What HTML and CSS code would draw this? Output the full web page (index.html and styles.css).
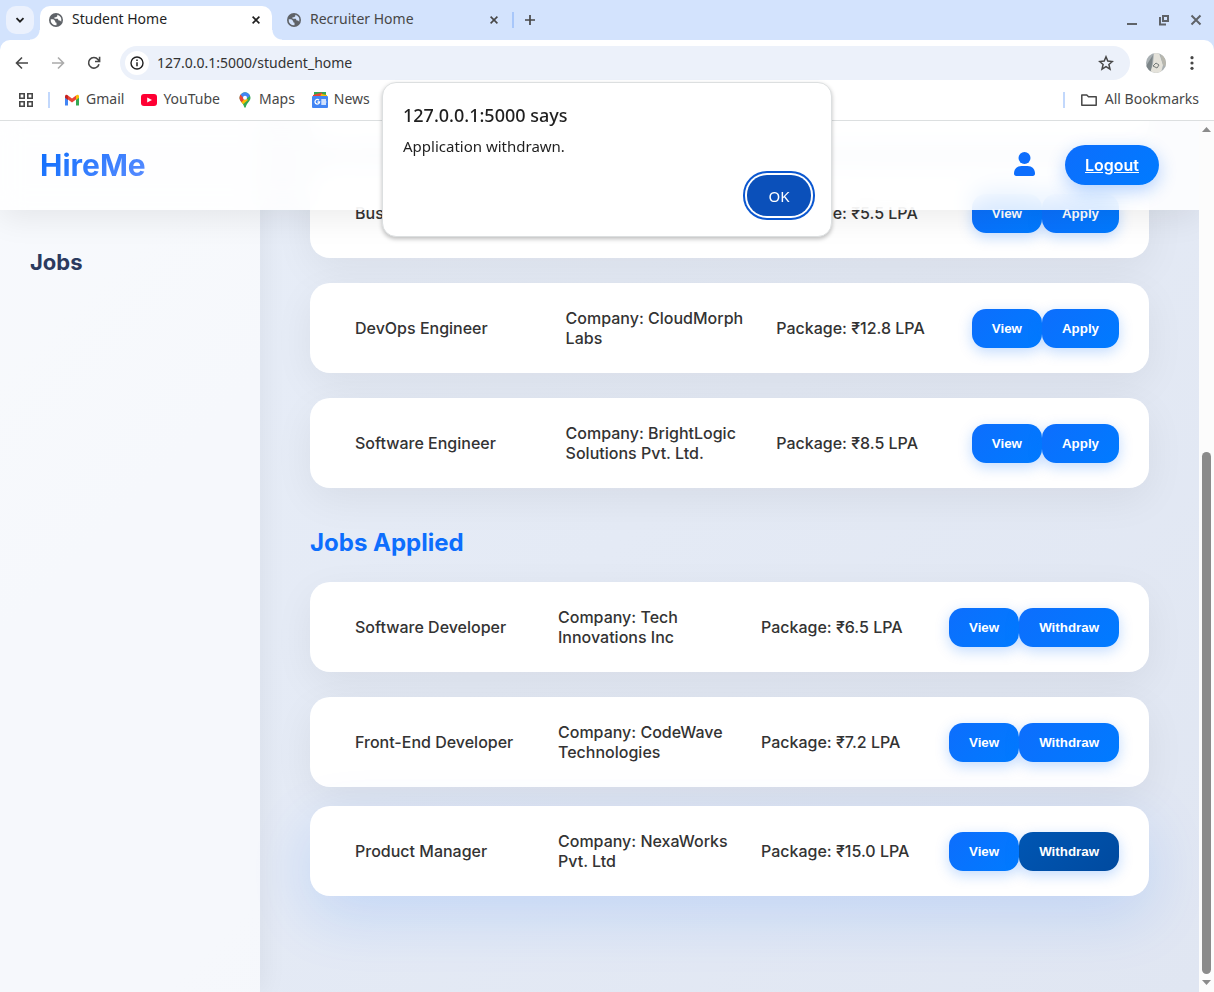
FILE: index.html
```html
<!DOCTYPE html>
<html lang="en">
<head>
<meta charset="utf-8">
<title>Student Home</title>
<link rel="stylesheet" href="styles.css">
</head>
<body>
<div class="browser">
  <div class="tabstrip">
    <button class="tab-search" aria-label="Search tabs"><svg width="10" height="10" viewBox="0 0 10 10"><path d="M1.500 3.200 5 6.700l3.500-3.500" fill="none" stroke="#1f1f1f" stroke-width="1.800"/></svg></button>
    <div class="tab tab-active">
      <svg class="globe" width="14" height="14" viewBox="0 0 14 14"><circle cx="7" cy="7" r="7" fill="#5f6368"/><path d="M1.700 6.200h2.600l1.900 1.700v1.300l1.300.6v2.500A5.400 5.400 0 0 1 1.700 6.200zM8.300 1.700v1.500L7 4.300H5.500v1.500h3.300l.9 1.700h1.400l1.100 1.200A5.500 5.500 0 0 0 8.300 1.700z" fill="#fff"/></svg>
      <span class="tab-title">Student Home</span>
      <button class="tab-close" aria-label="Close Student Home"><svg width="8" height="8" viewBox="0 0 8 8"><path d="M.6.6l6.800 6.800M7.400.6.6 7.400" stroke="#1f1f1f" stroke-width="1.600"/></svg></button>
    </div>
    <div class="tab">
      <svg class="globe" width="14" height="14" viewBox="0 0 14 14"><circle cx="7" cy="7" r="7" fill="#5f6368"/><path d="M1.700 6.200h2.600l1.900 1.700v1.300l1.300.6v2.500A5.400 5.400 0 0 1 1.700 6.200zM8.300 1.700v1.500L7 4.300H5.500v1.500h3.300l.9 1.700h1.400l1.100 1.200A5.500 5.500 0 0 0 8.300 1.700z" fill="#d3e3fd"/></svg>
      <span class="tab-title">Recruiter Home</span>
      <button class="tab-close" aria-label="Close Recruiter Home"><svg width="8" height="8" viewBox="0 0 8 8"><path d="M.6.6l6.800 6.800M7.400.6.6 7.400" stroke="#474747" stroke-width="1.600"/></svg></button>
    </div>
    <span class="divider"></span>
    <button class="new-tab" aria-label="New tab"><svg width="12" height="12" viewBox="0 0 12 12"><path d="M6 1v10M1 6h10" stroke="#474747" stroke-width="1.700"/></svg></button>
    <div class="window-controls">
      <button aria-label="Minimize"><svg width="12" height="12" viewBox="0 0 12 12"><path d="M1 10h10" stroke="#5f6368" stroke-width="2"/></svg></button>
      <button aria-label="Restore"><svg width="12" height="12" viewBox="0 0 12 12"><path d="M5 2h5v5H5zM2 3v7.500h6" fill="none" stroke="#5f6368" stroke-width="2"/></svg></button>
      <button aria-label="Close window"><svg width="12" height="12" viewBox="0 0 12 12"><path d="M1.500 1.500l9 9M10.500 1.500l-9 9" stroke="#5f6368" stroke-width="2"/></svg></button>
    </div>
  </div>

  <div class="chrome">
    <div class="toolbar">
      <button aria-label="Back"><svg width="14" height="14" viewBox="0 0 14 14"><path d="M13 7H2M7 1.500 1.500 7 7 12.500" fill="none" stroke="#474747" stroke-width="1.600"/></svg></button>
      <button aria-label="Forward"><svg width="14" height="14" viewBox="0 0 14 14"><path d="M1 7h11M7 1.500 12.500 7 7 12.500" fill="none" stroke="#ababab" stroke-width="1.600"/></svg></button>
      <button aria-label="Reload"><svg width="14" height="14" viewBox="0 0 14 14"><path d="M12 8.200A5.300 5.300 0 1 1 11 3.400L12.300 5M12.600.8v4.700H8" fill="none" stroke="#474747" stroke-width="1.600"/></svg></button>
      <div class="omnibox">
        <button class="site-info" aria-label="Site information"><svg width="14" height="14" viewBox="0 0 14 14"><circle cx="7" cy="7" r="6" fill="none" stroke="#1f1f1f" stroke-width="1.400"/><path d="M7 6.300v4M7 3.500v1.500" stroke="#1f1f1f" stroke-width="1.500"/></svg></button>
        <input class="url" type="text" aria-label="Address" value="127.0.0.1:5000/student_home">
        <button class="star" aria-label="Bookmark this page"><svg width="16" height="16" viewBox="0 0 16 16"><path d="M8 1.800l1.800 4.300 4.600.4-3.500 3 1.100 4.600L8 11.700l-4 2.400 1.100-4.600-3.500-3 4.600-.4z" fill="none" stroke="#474747" stroke-width="1.500"/></svg></button>
      </div>
      <button class="profile" aria-label="Profile"><svg width="20" height="20" viewBox="0 0 20 20"><defs><clipPath id="avatar"><circle cx="10" cy="10" r="10"/></clipPath></defs><g clip-path="url(#avatar)"><path fill="#a9b0b3" d="M0 0h20v20H0z"/><path fill="#7c8588" d="M0 13 7 2 5 20H0z"/><path fill="#e4e2da" d="M8 0h5l4 12-2 8H4l3-9z"/><path fill="#b8b7ae" d="M14 0h6v14l-3-2z"/><path fill="none" stroke="#747b7a" d="M7 13l3-3 3 2-2 3-2-1z"/></g></svg></button>
      <button class="menu" aria-label="Browser menu"><svg width="4" height="14" viewBox="0 0 4 14"><g fill="#474747"><circle cx="2" cy="1.700" r="1.600"/><circle cx="2" cy="7" r="1.600"/><circle cx="2" cy="12.300" r="1.600"/></g></svg></button>
    </div>
    <nav class="bookmarks" aria-label="Bookmarks">
      <button aria-label="Apps"><svg width="14" height="14" viewBox="0 0 14 14"><path d="M.8.800h4.400v4.400H.8zM8.800.800h4.400v4.400H8.800zM.8 8.800h4.400v4.400H.8zM8.800 8.800h4.400v4.400H8.800z" fill="none" stroke="#474747" stroke-width="1.600"/></svg></button>
      <span class="divider"></span>
      <a href="#gmail"><svg width="16" height="16" viewBox="0 0 16 16"><path d="M1 4v9.500h3V7z" fill="#4285f4"/><path d="M15 4v9.500h-3V7z" fill="#34a853"/><path d="M4 3.500v4L8 10.500l4-3v-4L8 6.500z" fill="#ea4335"/><path d="M1 4.200v1.600l3 2.200V3.500C2.800 2 1 2.700 1 4.200z" fill="#c5221f"/><path d="M15 4.200v1.600L12 8V3.500c1.200-1.500 3-.8 3 .7z" fill="#fbbc04"/></svg><span>Gmail</span></a>
      <a href="#youtube"><svg width="16" height="16" viewBox="0 0 16 16"><rect y="2" width="16" height="12" rx="3" fill="#f03"/><path d="M6.200 5.500v5L11 8z" fill="#fff"/></svg><span>YouTube</span></a>
      <a href="#maps"><svg width="16" height="16" viewBox="0 0 16 16"><defs><clipPath id="pin"><path d="M8 .3a5.500 5.500 0 0 1 5.500 5.500c0 3.700-3.500 4.700-4.600 9-.3 1.200-1.500 1.200-1.800 0C6 10.500 2.500 9.500 2.500 5.800A5.500 5.500 0 0 1 8 .3z"/></clipPath></defs><g clip-path="url(#pin)"><path d="M0 0h16v16H0z" fill="#34a853"/><path d="M0 12 8 5l3 3-7 6z" fill="#fbbc04"/><path d="M0 9V2h5l4 3-5 6z" fill="#ea4335"/><path d="M3.500 2.500 6 0h8v3L8 8z" fill="#4285f4"/></g><circle cx="8" cy="5.800" r="2" fill="#fff"/></svg><span>Maps</span></a>
      <a href="#news"><svg width="16" height="16" viewBox="0 0 16 16"><path d="M2 0h12v5H2z" fill="#34a853"/><path d="M1 3l9-2.500L11 5H1z" fill="#ea4335"/><path d="M9 2l6 1v3H8z" fill="#fbbc04"/><rect y="4" width="16" height="12" rx="1" fill="#4285f4"/><path d="M7 8.200A2.300 2.300 0 1 0 7.600 10H5.500M9.300 8h4.700M9.300 10h5M9.300 12h4.700" fill="none" stroke="#fff" stroke-width="1.300"/></svg><span>News</span></a>
      <span class="divider divider-end"></span>
      <a href="#all"><svg width="16" height="16" viewBox="0 0 16 16"><path d="M.8 3h5l1.700 1.700h7.700v8.500H.8z" fill="none" stroke="#474747" stroke-width="1.500" stroke-linejoin="round"/></svg><span>All Bookmarks</span></a>
    </nav>
  </div>

  <div class="viewport">
    <div class="page">
      <header class="header">
        <span class="logo">HireMe</span>
        <div class="header-actions">
          <a class="profile-link" href="#profile" aria-label="Profile"><svg width="21" height="24" viewBox="0 0 21 24"><g fill="#0d6efd"><circle cx="10.500" cy="6" r="6"/><path d="M0 21.500C0 17 3 14 7.500 14h6c4.500 0 7.500 3 7.500 7.500 0 1.500-.8 2.500-2.300 2.500H2.300C.8 24 0 23 0 21.500z"/></g></svg></a>
          <a class="logout" href="#logout">Logout</a>
        </div>
      </header>
      <aside class="sidebar"><h2 class="sidebar-title">Jobs</h2></aside>
      <main class="content">
        <div class="card-end"></div>
        <section class="jobs">
          <article class="card">
            <span class="cell">Business</span>
            <span class="cell"></span>
            <span class="cell">Package: ₹5.5 LPA</span>
            <div class="actions"><button class="btn">View</button><button class="btn">Apply</button></div>
          </article>
          <article class="card">
            <span class="cell">DevOps Engineer</span>
            <span class="cell">Company: CloudMorph Labs</span>
            <span class="cell">Package: ₹12.8 LPA</span>
            <div class="actions"><button class="btn">View</button><button class="btn">Apply</button></div>
          </article>
          <article class="card">
            <span class="cell">Software Engineer</span>
            <span class="cell">Company: BrightLogic Solutions Pvt. Ltd.</span>
            <span class="cell">Package: ₹8.5 LPA</span>
            <div class="actions"><button class="btn">View</button><button class="btn">Apply</button></div>
          </article>
        </section>
        <h2 class="section-title">Jobs Applied</h2>
        <section class="jobs">
          <article class="card">
            <span class="cell">Software Developer</span>
            <span class="cell">Company: Tech Innovations Inc</span>
            <span class="cell">Package: ₹6.5 LPA</span>
            <div class="actions"><button class="btn">View</button><button class="btn">Withdraw</button></div>
          </article>
          <article class="card">
            <span class="cell">Front-End Developer</span>
            <span class="cell">Company: CodeWave Technologies</span>
            <span class="cell">Package: ₹7.2 LPA</span>
            <div class="actions"><button class="btn">View</button><button class="btn">Withdraw</button></div>
          </article>
          <article class="card card-raised">
            <span class="cell">Product Manager</span>
            <span class="cell">Company: NexaWorks Pvt. Ltd</span>
            <span class="cell">Package: ₹15.0 LPA</span>
            <div class="actions"><button class="btn">View</button><button class="btn btn-pressed">Withdraw</button></div>
          </article>
        </section>
      </main>
    </div>
    <div class="scrollbar">
      <svg width="9" height="5" viewBox="0 0 9 5"><path d="M4.500 0 9 5H0z" fill="#8b8b8b"/></svg>
      <div class="track"><div class="thumb"></div></div>
      <svg width="9" height="5" viewBox="0 0 9 5"><path d="M4.500 5 9 0H0z" fill="#8b8b8b"/></svg>
    </div>
  </div>

  <div class="dialog" role="alertdialog" aria-labelledby="dialog-title" aria-describedby="dialog-text">
    <h1 class="dialog-title" id="dialog-title">127.0.0.1:5000 says</h1>
    <p class="dialog-text" id="dialog-text">Application withdrawn.</p>
    <button class="dialog-ok">OK</button>
  </div>
</div>
</body>
</html>
```

FILE: styles.css
```css
* { box-sizing: border-box; }

body {
  margin: 0;
  font-family: Inter, "Liberation Sans", sans-serif;
  color: #333;
}

h1, h2, p { margin: 0; }
button { border: 0; padding: 0; background: none; }
svg { display: block; flex: none; }

.browser {
  position: relative;
  display: flex;
  flex-direction: column;
  height: 100vh;
  overflow: hidden;
  background: #d3e3fd;
}

/* Browser frame */
.tabstrip, .chrome, .dialog {
  font-family: "Noto Sans", "Open Sans", sans-serif;
  font-size: 14px;
}

.tabstrip {
  display: flex;
  align-items: center;
  height: 40px;
  padding: 0 12px 0 6px;
}

.tab-search {
  display: grid;
  place-items: center;
  width: 28px;
  height: 28px;
  margin-right: 6px;
  border-radius: 10px;
  background: #ebf1fd;
}

.tab {
  position: relative;
  display: flex;
  align-items: center;
  gap: 9px;
  width: 232px;
  height: 34px;
  padding: 0 12px 6px 9px;
  align-self: flex-end;
  color: #474747;
}

.tab + .tab { width: 240px; padding-left: 15px; padding-right: 14px; }

.tab-active { border-radius: 10px 10px 0 0; background: #fff; color: #1f1f1f; }

.tab-active::before, .tab-active::after {
  content: "";
  position: absolute;
  bottom: 0;
  width: 10px;
  height: 10px;
}
.tab-active::before { right: 100%; background: radial-gradient(circle at 0 0, transparent 9px, #fff 10px); }
.tab-active::after { left: 100%; background: radial-gradient(circle at 100% 0, transparent 9px, #fff 10px); }

.tab-title { flex: 1; line-height: 18px; padding-bottom: 2px; }

.divider { width: 2px; height: 16px; background: #c2d8fc; }
.tabstrip .divider { background: #a8c7fa; }
.new-tab { margin-left: 10px; }

.window-controls { display: flex; gap: 20px; margin-left: auto; }

.chrome {
  height: 81px;
  border-bottom: 1px solid #dcdfe0;
  border-radius: 10px 10px 0 0;
  background: #fff;
  color: #474747;
}

.toolbar {
  display: flex;
  align-items: center;
  gap: 22px;
  height: 46px;
  padding: 0 20px 0 15px;
}

.omnibox {
  display: flex;
  align-items: center;
  flex: 1;
  height: 34px;
  margin-left: -3px;
  margin-right: -6px;
  padding: 0 16px 0 5px;
  border-radius: 17px;
  background: #ecf1fa;
}

.site-info {
  display: grid;
  place-items: center;
  width: 24px;
  height: 24px;
  border-radius: 50%;
  background: #fff;
}

.url {
  flex: 1;
  margin-left: 8px;
  padding: 0 0 2px;
  border: 0;
  background: none;
  color: #333;
  font: inherit;
}

.menu { margin-left: 2px; }

.bookmarks {
  display: flex;
  align-items: center;
  height: 28px;
  padding: 0 15px 0 19px;
}

.bookmarks a {
  display: flex;
  align-items: center;
  gap: 6px;
  margin-left: 17px;
  color: #474747;
  text-decoration: none;
}
.bookmarks span { line-height: 18px; padding-bottom: 2px; }
.bookmarks .divider { margin-left: 15px; padding: 0; }
.bookmarks .divider + a { margin-left: 14px; }
.bookmarks .divider-end { margin-left: auto; }
.bookmarks .divider-end + a { gap: 8px; margin-left: 16px; }

/* Scrolled document */
.viewport { display: flex; flex: 1; min-height: 0; }

.page {
  position: relative;
  display: flex;
  flex: 1;
  overflow: hidden;
  background: linear-gradient(135deg, #e8eef8, #e0e6f2);
}

.header {
  position: absolute;
  inset: 0 0 auto;
  z-index: 2;
  display: flex;
  align-items: center;
  justify-content: space-between;
  height: 89px;
  padding: 0 40px 2px;
  background: rgba(255, 255, 255, 0.85);
  backdrop-filter: blur(12px);
  box-shadow: 0 8px 32px rgba(0, 0, 0, 0.08);
}

.logo {
  background: linear-gradient(135deg, #0d6efd, #5b8cff);
  background-clip: text;
  color: transparent;
  font-size: 30px;
  font-weight: 700;
}

.header-actions { display: flex; align-items: center; gap: 30px; }
.profile-link { padding-bottom: 2px; }

.logout {
  padding: 10px 20px;
  border-radius: 20px;
  background: linear-gradient(135deg, #0d6efd, #007bff);
  box-shadow: 0 6px 18px rgba(13, 110, 253, 0.3);
  color: #fff;
  font-size: 16px;
  font-weight: 600;
  line-height: 20px;
}

.sidebar {
  z-index: 1;
  width: 260px;
  padding: 128px 30px 0;
  background: rgba(255, 255, 255, 0.65);
  box-shadow: 4px 0 24px rgba(0, 0, 0, 0.05);
}

.sidebar-title {
  color: #2b3a5e;
  font-size: 22px;
  font-weight: 700;
  line-height: 27px;
}

.content { flex: 1; padding: 0 50px; }

.card-end {
  height: 22px;
  margin-bottom: 25px;
  border-radius: 0 0 20px 20px;
  background: #fff;
}

.jobs { display: flex; flex-direction: column; gap: 25px; }

.card {
  display: flex;
  align-items: center;
  min-height: 90px;
  padding: 25px 30px;
  border-radius: 20px;
  background: #fff;
  box-shadow: 0 12px 40px rgba(0, 0, 0, 0.06);
}

.card-raised {
  margin-top: -6px;
  box-shadow: 0 20px 60px rgba(13, 110, 253, 0.15);
}

.cell {
  flex: 1;
  padding: 0 15px;
  font-size: 16px;
  font-weight: 500;
  line-height: 20px;
}

.actions { display: flex; }

.btn {
  padding: 12px 20px;
  border-radius: 14px;
  background: linear-gradient(135deg, #0d6efd, #007bff);
  box-shadow: 0 4px 14px rgba(13, 110, 253, 0.25);
  color: #fff;
  font-family: "Liberation Sans", Arial, sans-serif;
  font-weight: 600;
}

.btn-pressed { background: linear-gradient(135deg, #0056b3, #004a9f); }

.section-title {
  margin: 40px 0 25px;
  color: #0d6efd;
  font-size: 24px;
  font-weight: 700;
  line-height: 29px;
}

.scrollbar {
  display: flex;
  flex-direction: column;
  align-items: center;
  width: 15px;
  padding: 6px 0 7px;
  background: #fcfcfc;
}

.track {
  display: flex;
  flex: 1;
  flex-direction: column;
  justify-content: flex-end;
  padding-bottom: 6px;
}

.thumb {
  width: 9px;
  height: 62%;
  border-radius: 5px;
  background: #8b8b8b;
}

/* Alert */
.dialog {
  position: absolute;
  top: 82px;
  left: 50%;
  z-index: 3;
  display: flex;
  flex-direction: column;
  width: 450px;
  padding: 20px 20px 20px 20px;
  border: 1px solid #dcdfe0;
  border-radius: 14px;
  background: #fff;
  box-shadow: 0 2px 4px rgba(0, 0, 0, 0.25);
  color: #1f1f1f;
  transform: translateX(-50%);
}

.dialog-title { font-size: 18px; font-weight: 500; line-height: 24px; }
.dialog-text { margin-top: 8px; font-size: 15px; line-height: 22px; }

.dialog-ok {
  align-self: flex-end;
  width: 64px;
  height: 41px;
  margin-top: 18px;
  border-radius: 20px;
  background: #0b50ba;
  box-shadow: 0 0 0 2px #fff, 0 0 0 4px #0b57d0;
  color: #fff;
  font: inherit;
  font-size: 15px;
}
```
